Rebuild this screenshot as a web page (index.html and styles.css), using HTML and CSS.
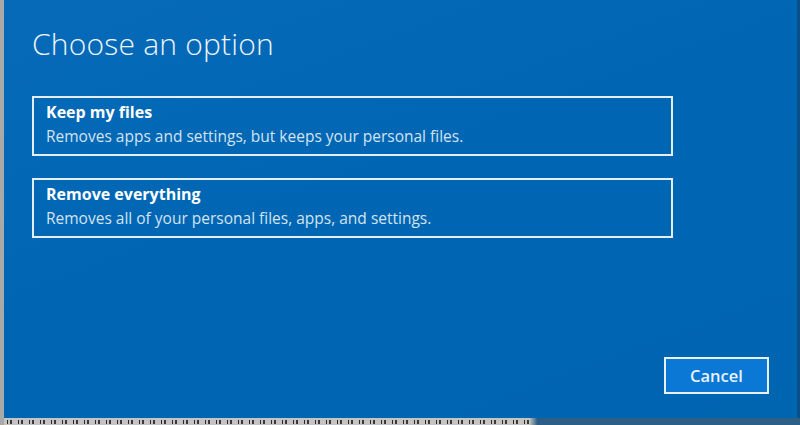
FILE: index.html
```html
<!DOCTYPE html>
<html lang="en">
<head>
    <meta charset="UTF-8">
    <title>Choose an option</title>
    <link rel="stylesheet" href="styles.css">
</head>
<body>
    <div class="page">
        <div class="dialog">
            <h1 class="title">Choose an option</h1>
            <div class="options">
                <div class="option">
                    <div class="option-name">Keep my files</div>
                    <div class="option-desc">Removes apps and settings, but keeps your personal files.</div>
                </div>
                <div class="option">
                    <div class="option-name">Remove everything</div>
                    <div class="option-desc">Removes all of your personal files, apps, and settings.</div>
                </div>
            </div>
            <div class="footer">
                <button class="btn">Cancel</button>
            </div>
        </div>
        <div class="under"></div>
    </div>
</body>
</html>
```

FILE: styles.css
```css
* {box-sizing: border-box;}
html, body {
    margin: 0;
    height: 100%;
    overflow: hidden;
}
body {
    background: #a9a9a9;
    font-family: "Open Sans", "Noto Sans", sans-serif;
}
.page {
    display: flex;
    flex-direction: column;
}
.dialog {
    display: flex;
    flex-direction: column;
    margin-left: 4px;
    width: 796px;
    height: 418px;
    padding: 24px 28px 24px 28px;
    background: linear-gradient(160deg, #066ab8 0%, #0066b3 45%, #0065b1 100%);
    border-right: 3px solid #0b4f88;
}
.title {
    margin: 0;
    font-size: 30px;
    font-weight: 300;
    line-height: 40px;
    color: #eef5fb;
    letter-spacing: 0.2px;
}
.options {
    display: flex;
    flex-direction: column;
    gap: 22px;
    margin-top: 32px;
}
.option {
    width: 641px;
    height: 60px;
    border: 2px solid #e3eef8;
    padding: 4px 12px 8px 12px;
}
.option-name {
    font-size: 16px;
    font-weight: 700;
    line-height: 20px;
    color: #ffffff;
}
.option-desc {
    margin-top: 4px;
    font-size: 15.5px;
    line-height: 20px;
    color: #d3e3f2;
}
.footer {
    display: flex;
    justify-content: flex-end;
    margin-top: auto;
}
.btn {
    width: 105px;
    height: 37px;
    background: #0a78d4;
    border: 2px solid #e8f1fa;
    color: #e9f2fb;
    font-family: "Open Sans", "Noto Sans", sans-serif;
    font-size: 16.5px;
    font-weight: 600;
    padding: 0;
}
.under {
    height: 7px;
    margin-left: 4px;
    background:
        repeating-linear-gradient(90deg, transparent 0 3px, #2a2a2a 3px 4px, transparent 4px 6px, #3a3a3a 6px 8px, transparent 8px 11px) 0 2px / 66% 4px no-repeat,
        linear-gradient(90deg, #c4c4c4 0%, #c4c4c4 66%, #2d5f86 67%, #2d5f86 100%);
}
```
